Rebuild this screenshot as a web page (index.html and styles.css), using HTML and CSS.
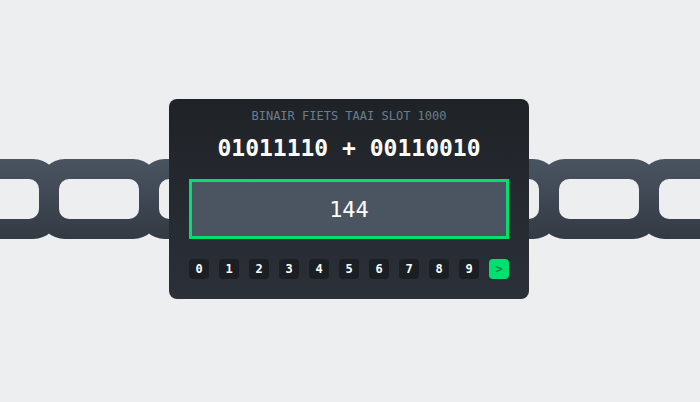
FILE: index.html
```html
<!DOCTYPE html>
<html>
<head>
<meta charset="utf-8">
<link rel="stylesheet" href="styles.css">
</head>
<body>
<div class="stage">
  <div class="chain">
    <div class="link"><div class="hole"></div></div>
    <div class="link"><div class="hole"></div></div>
    <div class="link"><div class="hole"></div></div>
    <div class="link"><div class="hole"></div></div>
    <div class="link"><div class="hole"></div></div>
    <div class="link"><div class="hole"></div></div>
    <div class="link"><div class="hole"></div></div>
    <div class="link"><div class="hole"></div></div>
  </div>
  <div class="card">
    <div class="title">BINAIR FIETS TAAI SLOT 1000</div>
    <div class="equation">01011110 + 00110010</div>
    <div class="answer">144</div>
    <div class="keys">
      <div class="key">0</div>
      <div class="key">1</div>
      <div class="key">2</div>
      <div class="key">3</div>
      <div class="key">4</div>
      <div class="key">5</div>
      <div class="key">6</div>
      <div class="key">7</div>
      <div class="key">8</div>
      <div class="key">9</div>
      <div class="key go">&gt;</div>
    </div>
  </div>
</div>
</body>
</html>
```
FILE: styles.css
```css
html, body {
  margin: 0;
  padding: 0;
  background: #eceef0;
}
.stage {
  width: 700px;
  height: 402px;
  display: grid;
  align-items: center;
  justify-items: center;
  overflow: hidden;
  font-family: "DejaVu Sans Mono", monospace;
}
.chain {
  grid-area: 1 / 1;
  width: 700px;
  display: flex;
  margin-top: -4px;
  padding-left: 0;
}
.link {
  flex: none;
  width: 80px;
  height: 40px;
  padding: 20px;
  border-radius: 26px;
  background: linear-gradient(#4a5461, #333a44);
  margin-left: -20px;
}
.link:first-child {
  margin-left: -61px;
}
.hole {
  width: 80px;
  height: 40px;
  border-radius: 10px;
  background: #eceef0;
}
.card {
  grid-area: 1 / 1;
  width: 320px;
  margin-top: -4px;
  margin-left: -2px;
  padding: 10px 20px 20px;
  border-radius: 8px;
  background: linear-gradient(#1f2327, #2b3039);
  display: flex;
  flex-direction: column;
  align-items: center;
}
.title {
  font-size: 12px;
  line-height: 14px;
  color: #6b7d8d;
}
.equation {
  margin-top: 10px;
  font-size: 23px;
  line-height: 30px;
  font-weight: bold;
  color: #ffffff;
}
.answer {
  margin-top: 16px;
  width: 314px;
  height: 54px;
  border: 3px solid #00e070;
  background: #4a5561;
  color: #ffffff;
  font-size: 22px;
  display: flex;
  align-items: center;
  justify-content: center;
}
.keys {
  margin-top: 20px;
  display: flex;
  gap: 10px;
}
.key {
  width: 20px;
  height: 20px;
  border-radius: 4px;
  background: #1b1f23;
  color: #ffffff;
  font-size: 12px;
  font-weight: bold;
  display: flex;
  align-items: center;
  justify-content: center;
}
.key.go {
  background: #00e070;
  color: #0b7a3c;
  font-weight: normal;
}
```
